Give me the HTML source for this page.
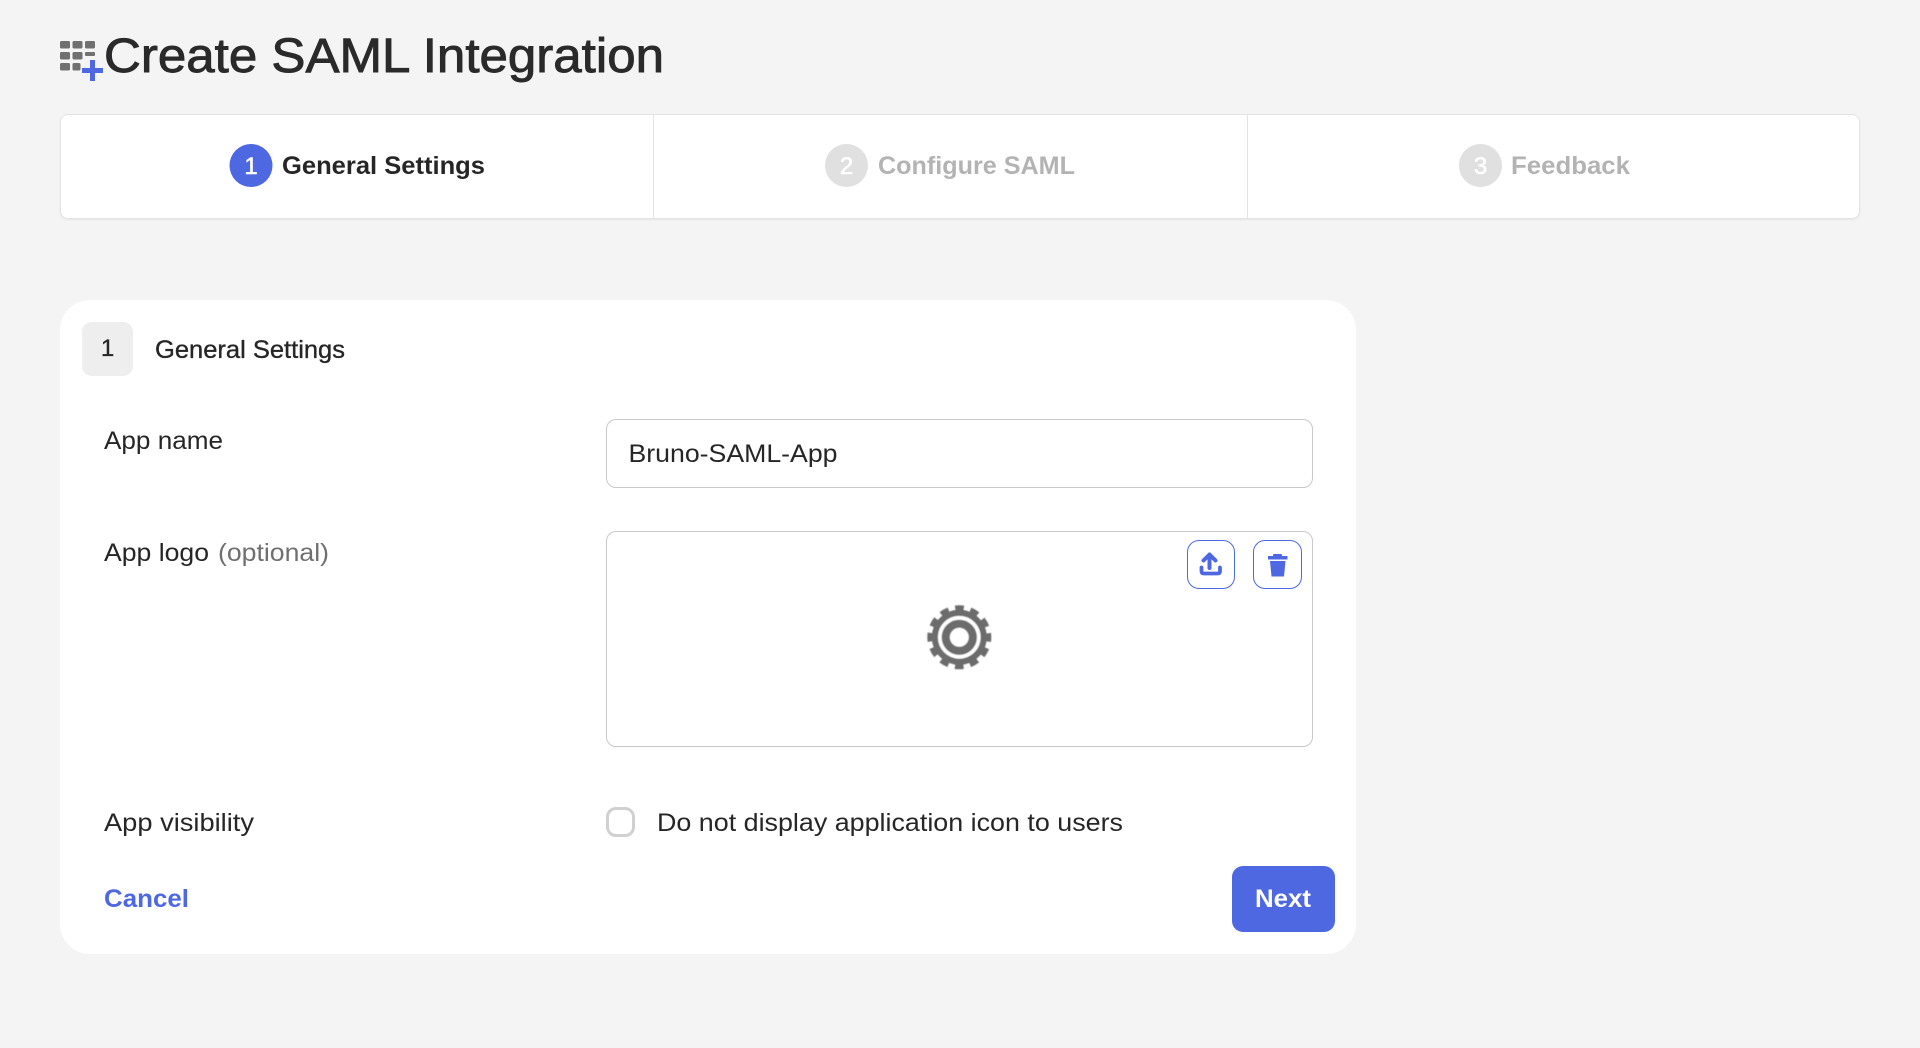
<!DOCTYPE html>
<html lang="en">
<head>
<meta charset="utf-8">
<title>Create SAML Integration</title>
<style>
html,body{margin:0;padding:0;width:1920px;height:1048px;overflow:hidden;background:#f4f4f4;}
body{position:relative;font-family:"Liberation Sans",sans-serif;color:#262626;}
.box{position:absolute;box-sizing:border-box;}
#stepper{left:60px;top:114px;width:1800px;height:105px;background:#fff;border:1px solid #e3e3e3;border-radius:8px;box-shadow:0 1px 2px rgba(0,0,0,.06);}
.div{position:absolute;top:0;bottom:0;width:1px;background:#e3e3e3;}
#card{left:60px;top:300px;width:1296px;height:654px;background:#fff;border-radius:30px;}
#badge{left:82px;top:322px;width:51px;height:54px;background:#eeeeee;border-radius:10px;}
#input{left:606px;top:419px;width:707px;height:69px;background:#fff;border:1px solid #c9c9c9;border-radius:10px;}
#logo{left:606px;top:531px;width:707px;height:216px;background:#fff;border:1px solid #c9c9c9;border-radius:10px;}
.ib{top:540px;height:49px;background:#fff;border:1px solid #4e68e2;border-radius:12px;}
#check{left:606px;top:807px;width:29px;height:30px;border:3px solid #d0d0d0;border-radius:10px;background:#fff;}
#next{left:1232px;top:866px;width:103px;height:66px;background:#4e68e2;border-radius:11px;}
svg{position:absolute;left:0;top:0;}
text{font-family:"Liberation Sans",sans-serif;}
</style>
</head>
<body>
<div class="box" id="stepper">
  <div class="div" style="left:592px"></div>
  <div class="div" style="left:1186px"></div>
</div>
<div class="box" id="card"></div>
<div class="box" id="badge"></div>
<div class="box" id="input"></div>
<div class="box" id="logo"></div>
<div class="box ib" style="left:1187px;width:48px"></div>
<div class="box ib" style="left:1253px;width:49px"></div>
<div class="box" id="check"></div>
<div class="box" id="next"></div>

<svg width="1920" height="1048" viewBox="0 0 1920 1048" xmlns="http://www.w3.org/2000/svg">
  <defs>
    <filter id="soft" x="-10%" y="-10%" width="120%" height="120%"><feGaussianBlur stdDeviation="0.6"/></filter>
  </defs>
  <!-- title icon -->
  <g fill="#707070">
    <rect x="60" y="41" width="10" height="7.500" rx="1.500"/>
    <rect x="72.500" y="41" width="10" height="7.500" rx="1.500"/>
    <rect x="85" y="41" width="10" height="7.500" rx="1.500"/>
    <rect x="60" y="52" width="10" height="7.500" rx="1.500"/>
    <rect x="72.500" y="52" width="10" height="7.500" rx="1.500"/>
    <rect x="85" y="52" width="10" height="4" rx="1"/>
    <rect x="60" y="63" width="10" height="7.500" rx="1.500"/>
    <rect x="72.500" y="63" width="8" height="7.500" rx="1.500"/>
  </g>
  <path d="M82 70.500H103M92.500 60V81" stroke="#4e68e2" stroke-width="5" fill="none"/>
  <text x="104" y="72" font-size="48" fill="#2a2a2a" stroke="#2a2a2a" stroke-width=".9" textLength="560" lengthAdjust="spacingAndGlyphs">Create SAML Integration</text>

  <!-- stepper -->
  <circle cx="251" cy="165.500" r="21.500" fill="#4e68e2"/>
  <text x="251" y="174" font-size="24" fill="#fff" stroke="#fff" stroke-width=".5" text-anchor="middle">1</text>
  <text x="282" y="174" font-size="25" font-weight="700" fill="#262626" textLength="203" lengthAdjust="spacingAndGlyphs">General Settings</text>
  <circle cx="846.500" cy="165.500" r="21.500" fill="#e0e0e0"/>
  <text x="846.500" y="174" font-size="24" fill="#fff" stroke="#fff" stroke-width=".5" text-anchor="middle">2</text>
  <text x="878" y="174" font-size="25" font-weight="700" fill="#b3b3b3" textLength="197" lengthAdjust="spacingAndGlyphs">Configure SAML</text>
  <circle cx="1480.500" cy="165.500" r="21.500" fill="#e0e0e0"/>
  <text x="1480.500" y="174" font-size="24" fill="#fff" stroke="#fff" stroke-width=".5" text-anchor="middle">3</text>
  <text x="1511" y="174" font-size="25" font-weight="700" fill="#b3b3b3" textLength="119" lengthAdjust="spacingAndGlyphs">Feedback</text>

  <!-- card header -->
  <text x="107.500" y="356" font-size="24" fill="#262626" stroke="#262626" stroke-width=".3" text-anchor="middle">1</text>
  <text x="155" y="358" font-size="25" fill="#262626" stroke="#262626" stroke-width=".35" textLength="190" lengthAdjust="spacingAndGlyphs">General Settings</text>

  <!-- labels -->
  <text x="104" y="449" font-size="25" fill="#262626" textLength="119" lengthAdjust="spacingAndGlyphs">App name</text>
  <text x="628.500" y="462" font-size="25" fill="#262626" textLength="209" lengthAdjust="spacingAndGlyphs">Bruno-SAML-App</text>
  <text x="104" y="561" font-size="25" fill="#262626" textLength="105" lengthAdjust="spacingAndGlyphs">App logo</text>
  <text x="218" y="561" font-size="25" fill="#707070" textLength="111" lengthAdjust="spacingAndGlyphs">(optional)</text>
  <text x="104" y="831" font-size="25" fill="#262626" textLength="150" lengthAdjust="spacingAndGlyphs">App visibility</text>
  <text x="657" y="831" font-size="25" fill="#262626" textLength="466" lengthAdjust="spacingAndGlyphs">Do not display application icon to users</text>
  <text x="104" y="907" font-size="25" font-weight="700" fill="#4e68e2" textLength="85" lengthAdjust="spacingAndGlyphs">Cancel</text>
  <text x="1255" y="907" font-size="25" font-weight="700" fill="#fff" textLength="56" lengthAdjust="spacingAndGlyphs">Next</text>

  <!-- upload icon -->
  <path d="M1209.500 568V555M1203.500 560.500L1209.500 554.500L1215.500 560.500" stroke="#4e68e2" stroke-width="4" fill="none" stroke-linecap="round" stroke-linejoin="round"/>
  <path d="M1201.500 567.500V571Q1201.500 573.500 1204 573.500H1217.500Q1220 573.500 1220 571V567.500" stroke="#4e68e2" stroke-width="3.800" fill="none" stroke-linecap="round"/>
  <!-- trash icon -->
  <g fill="#4e68e2">
    <rect x="1273" y="554" width="9" height="3" rx="1"/>
    <rect x="1268" y="556" width="19.500" height="3.500"/>
    <path d="M1270 561H1285.500L1284 576.500H1271.500Z"/>
  </g>
  <!-- gear -->
  <g filter="url(#soft)">
    <circle cx="959.300" cy="637.300" r="27.500" fill="#6c6c6c"/>
    <circle cx="959.300" cy="637.300" r="29" fill="none" stroke="#6c6c6c" stroke-width="6" stroke-dasharray="8.500 6.680" stroke-dashoffset="4.250"/>
    <circle cx="959.300" cy="637.300" r="19.500" fill="none" stroke="#fff" stroke-width="3.800"/>
    <circle cx="959.300" cy="637.300" r="9.500" fill="#fff"/>
  </g>
</svg>
</body>
</html>
